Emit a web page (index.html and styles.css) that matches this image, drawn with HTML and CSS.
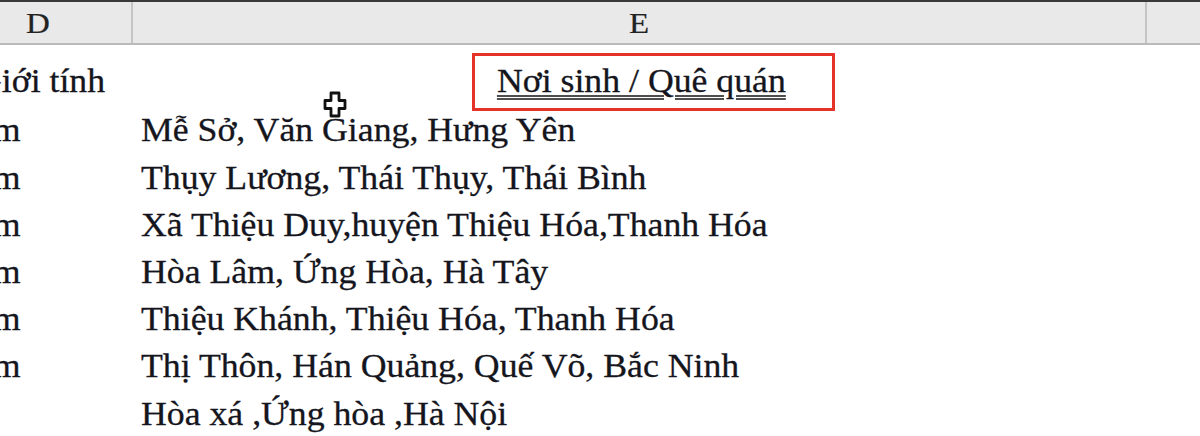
FILE: index.html
```html
<!DOCTYPE html>
<html lang="vi">
<head>
<meta charset="utf-8">
<title>Sheet</title>
<link rel="stylesheet" href="styles.css">
</head>
<body>
<div class="sheet">
  <div class="colheads">
    <div class="colhead col-d"><span class="wide">D</span></div>
    <div class="colhead col-e"><span class="wide">E</span></div>
    <div class="colhead col-f"></div>
  </div>
  <div class="grid">
    <div class="cell d head"><span class="txt clip-head">Giới tính</span></div>
    <div class="cell e head"><span class="txt title">Nơi sinh / Quê quán</span></div>
    <div class="cell f head"></div>

    <div class="cell d"><span class="txt clip">Nam</span></div>
    <div class="cell e"><span class="txt">Mễ Sở, Văn Giang, Hưng Yên</span></div>
    <div class="cell f"></div>

    <div class="cell d"><span class="txt clip">Nam</span></div>
    <div class="cell e"><span class="txt">Thụy Lương, Thái Thụy, Thái Bình</span></div>
    <div class="cell f"></div>

    <div class="cell d"><span class="txt clip">Nam</span></div>
    <div class="cell e"><span class="txt">Xã Thiệu Duy,huyện Thiệu Hóa,Thanh Hóa</span></div>
    <div class="cell f"></div>

    <div class="cell d"><span class="txt clip">Nam</span></div>
    <div class="cell e"><span class="txt">Hòa Lâm, Ứng Hòa, Hà Tây</span></div>
    <div class="cell f"></div>

    <div class="cell d"><span class="txt clip">Nam</span></div>
    <div class="cell e"><span class="txt">Thiệu Khánh, Thiệu Hóa, Thanh Hóa</span></div>
    <div class="cell f"></div>

    <div class="cell d"><span class="txt clip">Nam</span></div>
    <div class="cell e"><span class="txt">Thị Thôn, Hán Quảng, Quế Võ, Bắc Ninh</span></div>
    <div class="cell f"></div>

    <div class="cell d"></div>
    <div class="cell e"><span class="txt">Hòa xá ,Ứng hòa ,Hà Nội</span></div>
    <div class="cell f"></div>
  </div>
  <div class="highlight"></div>
  <svg class="cursor" width="24" height="27" viewBox="0 0 24 27" aria-hidden="true">
    <path d="M8 2 H16 V9.5 H22 V17.5 H16 V25 H8 V17.5 H2 V9.5 H8 Z" fill="#fff" stroke="#111" stroke-width="2.8" stroke-linejoin="round"/>
  </svg>
</div>
</body>
</html>
```
FILE: styles.css
```css
html, body {
  margin: 0;
  padding: 0;
  background: #fff;
}
body {
  width: 1200px;
  height: 436px;
  overflow: hidden;
  font-family: "Liberation Serif", "Times New Roman", serif;
  color: #15151d;
}
.sheet {
  position: relative;
  width: 1200px;
  height: 436px;
  overflow: hidden;
}
.colheads {
  display: grid;
  grid-template-columns: 133px 1014px 53px;
  height: 41px;
  background: #e9e9e9;
  border-top: 2px solid #3a3a3a;
  border-bottom: 2px solid #bababa;
}
.colhead {
  display: flex;
  align-items: center;
  justify-content: center;
  font-size: 30px;
  color: #222;
  border-right: 2px solid #c4c4c4;
}
.colhead.col-d {
  justify-content: flex-start;
  padding-left: 27px;
}
.colhead.col-f {
  border-right: none;
}
.wide {
  display: inline-block;
  transform: scaleX(1.1);
  -webkit-text-stroke: 0.2px #222;
}
.grid {
  display: grid;
  grid-template-columns: 135px 1013px 52px;
  grid-template-rows: 62px repeat(7, 47.2px);
}
.cell {
  font-size: 33px;
  line-height: 1;
  display: flex;
  align-items: flex-end;
  padding-bottom: 6.8px;
  white-space: nowrap;
  overflow: hidden;
}
.txt {
  display: inline-block;
  transform: scaleX(1.083);
  transform-origin: left bottom;
  -webkit-text-stroke: 0.3px #15151d;
}
.cell.e {
  padding-left: 6px;
  overflow: visible;
}
.cell.head {
  padding-bottom: 8.6px;
}
.cell.e.head {
  justify-content: center;
  padding-left: 0;
}
.title {
  transform-origin: center bottom;
  text-decoration: underline double #4e4e4e;
  text-decoration-thickness: 2px;
  text-underline-offset: 3px;
}
.clip-head {
  margin-left: -24px;
}
.clip {
  margin-left: -49px;
}
.highlight {
  position: absolute;
  left: 472px;
  top: 53px;
  width: 357px;
  height: 52px;
  border: 3px solid #e6332a;
}
.cursor {
  position: absolute;
  left: 323px;
  top: 91px;
}
```
